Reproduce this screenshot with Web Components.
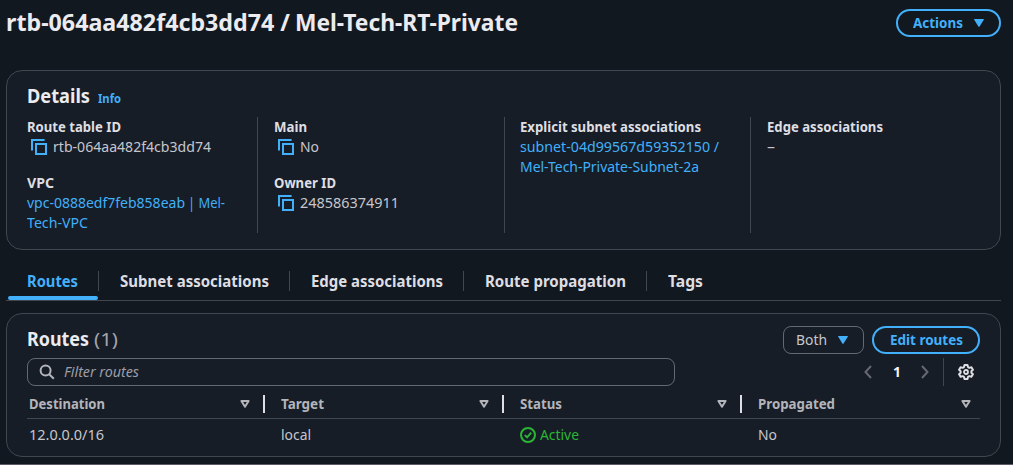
<!DOCTYPE html>
<html lang="en">
<head>
<meta charset="utf-8">
<title>Route table details</title>
<style>
  :root {
    --page: #12181f; --card: #161d26; --line: #424650; --divider: #424650;
    --link: #42b0fa; --heading: #ebebf0; --label: #dedee3; --text: #c6c6cd; --muted: #a4a4ad;
  }
  html, body { margin: 0; height: 465px; overflow: hidden; background: var(--page); }
  body { font-family: "Noto Sans", "Open Sans", sans-serif; font-size: 14px; line-height: 20px; color: var(--text); }
</style>
</head>
<body>
<route-page></route-page>
<script>
const define = (name, html, setup) => customElements.define(name, class extends HTMLElement {
  connectedCallback() {
    if (!this.shadowRoot) {
      const t = document.createElement('template');
      t.innerHTML = html;
      this.attachShadow({ mode: 'open' }).append(t.content.cloneNode(true));
    }
    if (setup) setup(this, this.shadowRoot);
  }
});

/* Text run condensed to a given advance width. */
define('ui-text', `<style>
  :host { display: inline-block; white-space: nowrap; flex: none; vertical-align: top; }
  span { display: inline-block; transform-origin: 0 50%; vertical-align: top; }
</style><span><slot></slot></span>`, (el, root) => {
  const w = +el.getAttribute('w'), span = root.querySelector('span');
  const natural = span.getBoundingClientRect().width;
  el.style.width = w + 'px';
  if (natural) span.style.transform = `scaleX(${w / natural})`;
});

const icons = {
  copy: ['0 0 16 16', '<path d="M1 11.6V1h12.6M5 5h10v10H5z" fill="none" stroke="currentColor" stroke-width="2"/>'],
  caret: ['0 0 10 8', '<path d="M.6 0h8.8q.8 0 .4.7L5.6 7.6q-.6.8-1.2 0L.2.7Q-.2 0 .6 0z" fill="currentColor"/>'],
  sort: ['0 0 10 8', '<path d="M1.4 1h7.2L5 6.7z" fill="none" stroke="currentColor" stroke-width="2" stroke-linejoin="round"/>'],
  search: ['0 0 16 16', '<circle cx="6.6" cy="6.5" r="5" fill="none" stroke="currentColor" stroke-width="2"/><path d="M10.2 10.2l4.6 4.6" stroke="currentColor" stroke-width="2"/>'],
  left: ['0 0 8 14', '<path d="M7 1L1.5 7 7 13" fill="none" stroke="currentColor" stroke-width="2"/>'],
  right: ['0 0 8 14', '<path d="M1 1l5.5 6L1 13" fill="none" stroke="currentColor" stroke-width="2"/>'],
  check: ['0 0 16 16', '<circle cx="8" cy="8" r="7" fill="none" stroke="currentColor" stroke-width="2"/><path d="M4.8 8.1l2.3 2.2 4.1-4.6" fill="none" stroke="currentColor" stroke-width="2"/>'],
  gear: ['0 0 16 16', '<path d="M6.5 1h3l.5 2.1 1.3.75 2.1-.6 1.5 2.6L13.4 7.3v1.4l1.5 1.5-1.5 2.55-2.1-.6-1.3.75L9.5 15h-3L6 12.9l-1.3-.75-2.1.6-1.5-2.55L2.6 8.700V7.3L1.1 5.85l1.5-2.6 2.1.6L6 3.1z" fill="none" stroke="currentColor" stroke-width="2" stroke-linejoin="round"/><circle cx="8" cy="8" r="2" fill="none" stroke="currentColor" stroke-width="1.8"/>']
};
define('ui-icon', `<style>:host { display: inline-block; flex: none; } svg { display: block; width: 100%; height: 100%; }</style><svg></svg>`, (el, root) => {
  const [box, body] = icons[el.getAttribute('name')], svg = root.querySelector('svg');
  svg.setAttribute('viewBox', box);
  svg.innerHTML = body;
  const [, , w, h] = box.split(' ');
  el.style.width = w + 'px';
  el.style.height = h + 'px';
});

define('ui-button', `<style>
  :host { display: flex; align-items: center; justify-content: center; gap: 11px; box-sizing: border-box; height: 28px; flex: none;
    border: 2px solid var(--link); border-radius: 14px; color: var(--link); font-weight: 700; }
  :host([select]) { border: 1px solid #656871; border-radius: 8px; color: var(--text); font-weight: 400; gap: 11px; padding-right: 3px; }
</style><slot></slot>`);

define('ui-card', `<style>
  :host { display: block; box-sizing: border-box; width: 995px; background: var(--card); border: 1px solid var(--line); border-radius: 16px; }
</style><slot></slot>`);

define('detail-field', `<style>
  :host { display: block; }
  .label { color: var(--label); font-weight: 700; height: 20px; }
  .value { display: flex; flex-wrap: wrap; }
</style><div class="label"><slot name="label"></slot></div><div class="value"><slot></slot></div>`);

define('copy-icon', `<style>:host { display: flex; flex: none; width: 16px; height: 16px; padding: 2px 6px 2px 4px; color: var(--link); }</style><ui-icon name="copy"></ui-icon>`);

define('detail-panel', `<style>
  :host { display: block; }
  ui-card { height: 180px; padding: 14px 20px 0; }
  header { display: flex; height: 32px; gap: 8px; color: var(--heading); font-size: 19.5px; font-weight: 700; line-height: 22px; }
  .info { font-size: 12px; color: var(--link); line-height: 27px; }
  .cols { display: grid; grid-template-columns: 230px 247px 246px 230px; grid-template-rows: 116px; }
  .col { display: flex; flex-direction: column; gap: 16px; }
  .col + .col { border-left: 1px solid var(--divider); padding-left: 16px; }
  .col:nth-child(3) { padding-left: 15px; }
  .link { color: var(--link); }
</style>
<ui-card>
  <header><ui-text w="63">Details</ui-text><ui-text class="info" w="23">Info</ui-text></header>
  <div class="cols">
    <div class="col">
      <detail-field><ui-text slot="label" w="94">Route table ID</ui-text><copy-icon></copy-icon><ui-text w="158">rtb-064aa482f4cb3dd74</ui-text></detail-field>
      <detail-field><ui-text slot="label" w="27">VPC</ui-text><ui-text class="link" w="158">vpc-0888edf7feb858eab</ui-text><ui-text class="link" w="37" style="margin-left:3px">| Mel-</ui-text><ui-text class="link" w="61">Tech-VPC</ui-text></detail-field>
    </div>
    <div class="col">
      <detail-field><ui-text slot="label" w="33">Main</ui-text><copy-icon></copy-icon><ui-text w="19">No</ui-text></detail-field>
      <detail-field><ui-text slot="label" w="62">Owner ID</ui-text><copy-icon></copy-icon><ui-text w="99">248586374911</ui-text></detail-field>
    </div>
    <div class="col">
      <detail-field><ui-text slot="label" w="181">Explicit subnet associations</ui-text><ui-text class="link" w="199">subnet-04d99567d59352150 /</ui-text><ui-text class="link" w="179">Mel-Tech-Private-Subnet-2a</ui-text></detail-field>
    </div>
    <div class="col">
      <detail-field><ui-text slot="label" w="116">Edge associations</ui-text><ui-text w="8">–</ui-text></detail-field>
    </div>
  </div>
</ui-card>`);

define('ui-tab', `<style>
  :host { display: block; position: relative; height: 29px; padding: 0 21px 0 21px; font-size: 15.5px; font-weight: 700; color: var(--label); }
  .text { height: 20px; }
  :host([active]) { color: var(--link); }
  :host([active])::after { content: ""; position: absolute; left: 2px; right: 1px; bottom: 0; height: 4px; border-radius: 2px; background: var(--link); }
  :host(:not([last]))::before { content: ""; position: absolute; right: 0; top: 0; width: 1px; height: 20px; background: var(--divider); }
</style><div class="text"><slot></slot></div>`);

define('tab-bar', `<style>
  :host { display: flex; box-sizing: border-box; width: 995px; height: 30px; border-bottom: 1px solid var(--line); }
</style>
<ui-tab active><ui-text w="51">Routes</ui-text></ui-tab>
<ui-tab><ui-text w="149">Subnet associations</ui-text></ui-tab>
<ui-tab><ui-text w="132">Edge associations</ui-text></ui-tab>
<ui-tab><ui-text w="141">Route propagation</ui-text></ui-tab>
<ui-tab last><ui-text w="35">Tags</ui-text></ui-tab>`);

define('table-head', `<style>
  :host { display: flex; align-items: center; justify-content: space-between; height: 18px; padding-right: 13px; border-right: 2px solid var(--label); color: #b4b4bb; font-weight: 700; }
  :host([last]) { border: 0; padding-right: 9px; }
</style><slot></slot><ui-icon name="sort"></ui-icon>`);

define('routes-panel', `<style>
  :host { display: block; }
  ui-card { height: 144px; padding: 12px 20px 0; }
  .row { display: flex; align-items: center; height: 28px; }
  .title { color: var(--heading); font-size: 19.5px; font-weight: 700; line-height: 24px; margin-top: -3px; }
  .count { color: var(--muted); font-size: 18.5px; line-height: 24px; margin: -3px auto 0 5px; }
  .tools { margin-top: 4px; }
  .filter { display: flex; align-items: center; box-sizing: border-box; width: 648px; height: 28px; border: 1px solid #656871; border-radius: 8px; padding-left: 11px; gap: 9px; color: #b4b4bb; }
  .hint { font-style: italic; color: #9d9da6; }
  .pager { display: flex; align-items: center; margin-left: auto; color: #656871; height: 28px; }
  .num { font-weight: 700; color: #f5f5f8; margin: 0 20px 0 21px; }
  .prefs { display: flex; align-items: center; height: 28px; border-left: 1px solid var(--divider); margin-left: 14px; padding: 0 6px 0 14px; color: var(--label); }
  .grid { display: grid; grid-template-columns: 238px 239px 238px 238px; }
  .grid > * { padding-left: 16px; }
  .grid > :first-child { padding-left: 2px; }
  .heads { padding: 9px 0 5px; border-bottom: 1px solid var(--line); }
  .cells { height: 20px; padding-top: 6px; }
  .ok { display: flex; align-items: center; gap: 4px; color: #2bb534; }
</style>
<ui-card>
  <div class="row">
    <ui-text class="title" w="62">Routes</ui-text><ui-text class="count" w="24">(1)</ui-text>
    <ui-button select style="width:81px"><ui-text w="31">Both</ui-text><ui-icon name="caret" style="color:var(--link)"></ui-icon></ui-button>
    <ui-button style="width:108px;margin-left:8px"><ui-text w="73">Edit routes</ui-text></ui-button>
  </div>
  <div class="row tools">
    <div class="filter"><ui-icon name="search"></ui-icon><ui-text class="hint" w="75">Filter routes</ui-text></div>
    <div class="pager"><ui-icon name="left"></ui-icon><ui-text class="num" w="8">1</ui-text><ui-icon name="right"></ui-icon></div>
    <div class="prefs"><ui-icon name="gear"></ui-icon></div>
  </div>
  <div class="grid heads">
    <table-head><ui-text w="76">Destination</ui-text></table-head>
    <table-head><ui-text w="43">Target</ui-text></table-head>
    <table-head><ui-text w="42">Status</ui-text></table-head>
    <table-head last><ui-text w="77">Propagated</ui-text></table-head>
  </div>
  <div class="grid cells">
    <div><ui-text w="75">12.0.0.0/16</ui-text></div>
    <div><ui-text w="30">local</ui-text></div>
    <div class="ok"><ui-icon name="check"></ui-icon><ui-text w="39">Active</ui-text></div>
    <div><ui-text w="19">No</ui-text></div>
  </div>
</ui-card>`);

define('route-page', `<style>
  :host { display: flex; flex-direction: column; box-sizing: border-box; height: 465px; padding: 9px 12px 0 6px; border-bottom: 1px solid #5b5a66; }
  header { display: flex; justify-content: space-between; height: 61px; }
  h1 { display: flex; gap: 5px; margin: -2px 0 0; font-size: 23.5px; line-height: 30px; color: var(--heading); }
  tab-bar { margin-top: 21px; }
  routes-panel { margin-top: 12px; }
</style>
<header><h1><ui-text w="284">rtb-064aa482f4cb3dd74 /</ui-text><ui-text w="223">Mel-Tech-RT-Private</ui-text></h1>
<ui-button style="width:105px"><ui-text w="50">Actions</ui-text><ui-icon name="caret"></ui-icon></ui-button></header>
<detail-panel></detail-panel>
<tab-bar></tab-bar>
<routes-panel></routes-panel>`);
</script>
</body>
</html>
